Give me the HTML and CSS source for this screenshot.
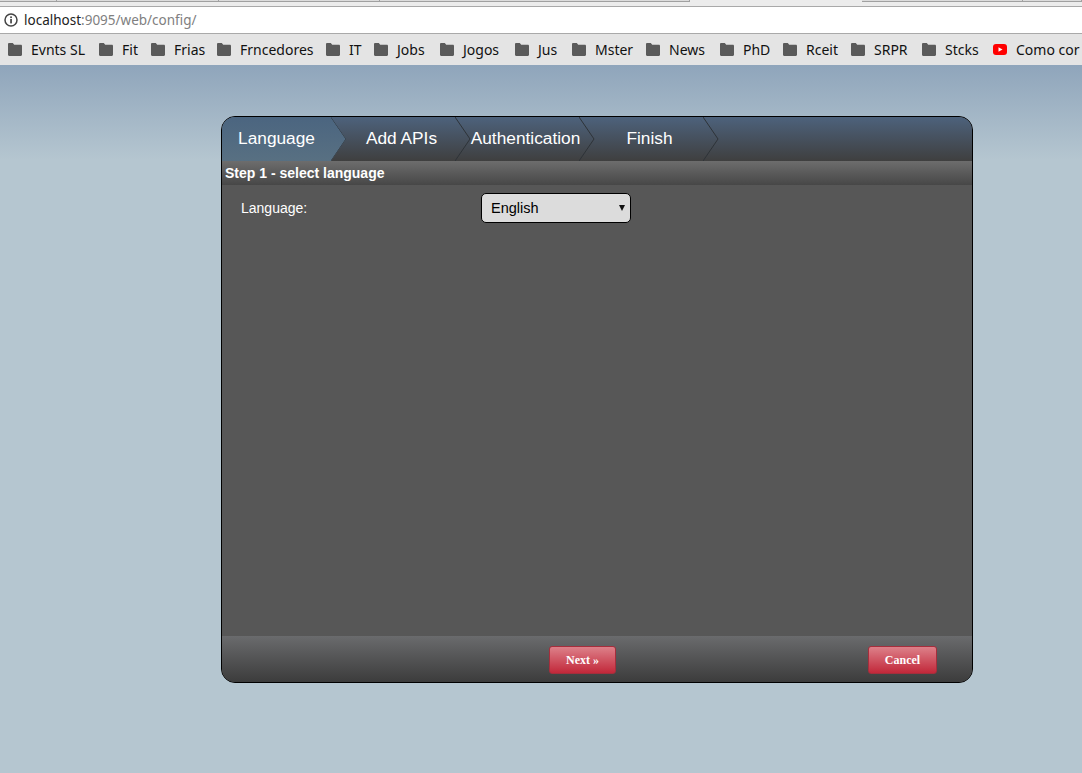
FILE: index.html
```html
<!DOCTYPE html>
<html lang="en">

<head>
    <meta charset="UTF-8">
    <title>config</title>
    <link rel="stylesheet" href="styles.css">
</head>

<body>
    <svg class="defs" width="0" height="0">
        <symbol id="folderIcon" viewBox="0 0 14 13">
            <path d="M0 1.2C0 .5.5 0 1.2 0h3.600l1.400 1.800h6.600c.7 0 1.200.5 1.200 1.200v8.800c0 .7-.5 1.200-1.200 1.200H1.200C.5 13 0 12.500 0 11.800z"/>
        </symbol>
        <symbol id="chevIcon" viewBox="0 0 16 44">
            <path d="M0 0l15 22L0 44" fill="none" stroke="#2e3338"/>
        </symbol>
    </svg>

    <div class="tabstrip">
        <span class="stripTab w1"></span>
        <span class="stripTab w2"></span>
        <span class="stripTab w3"></span>
        <span class="stripTab w4"></span>
        <span class="stripGap"></span>
        <span class="stripTab w5"></span>
        <span class="stripTab w6"></span>
    </div>

    <div class="address">
        <svg class="infoIcon" width="14" height="14" viewBox="0 0 14 14">
            <circle cx="7" cy="7" r="6" fill="none" stroke="#444" stroke-width="1.5"/>
            <rect x="6.2" y="6" width="1.7" height="4.4" fill="#444"/>
            <rect x="6.2" y="3.400" width="1.700" height="1.700" fill="#444"/>
        </svg>
        <span class="host">localhost</span><span class="path">:9095/web/config/</span>
    </div>

    <div class="bookmarks">
        <span class="mark"><svg class="folder"><use href="#folderIcon"/></svg>Evnts SL</span>
        <span class="mark"><svg class="folder"><use href="#folderIcon"/></svg>Fit</span>
        <span class="mark"><svg class="folder"><use href="#folderIcon"/></svg>Frias</span>
        <span class="mark"><svg class="folder"><use href="#folderIcon"/></svg>Frncedores</span>
        <span class="mark"><svg class="folder"><use href="#folderIcon"/></svg>IT</span>
        <span class="mark"><svg class="folder"><use href="#folderIcon"/></svg>Jobs</span>
        <span class="mark"><svg class="folder"><use href="#folderIcon"/></svg>Jogos</span>
        <span class="mark"><svg class="folder"><use href="#folderIcon"/></svg>Jus</span>
        <span class="mark"><svg class="folder"><use href="#folderIcon"/></svg>Mster</span>
        <span class="mark"><svg class="folder"><use href="#folderIcon"/></svg>News</span>
        <span class="mark"><svg class="folder"><use href="#folderIcon"/></svg>PhD</span>
        <span class="mark"><svg class="folder"><use href="#folderIcon"/></svg>Rceit</span>
        <span class="mark"><svg class="folder"><use href="#folderIcon"/></svg>SRPR</span>
        <span class="mark"><svg class="folder"><use href="#folderIcon"/></svg>Stcks</span>
        <span class="mark"><svg class="yt" viewBox="0 0 14 11"><rect width="14" height="11" rx="3" fill="#f00"/><path d="M5.500 3.200v4.600l4-2.300z" fill="#fff"/></svg>Como cor</span>
    </div>

    <div class="page">
        <div class="wizard">
            <div class="steps">
                <div class="step current">Language<svg class="chev"><use href="#chevIcon"/></svg></div>
                <div class="step">Add APIs<svg class="chev"><use href="#chevIcon"/></svg></div>
                <div class="step">Authentication<svg class="chev"><use href="#chevIcon"/></svg></div>
                <div class="step">Finish<svg class="chev"><use href="#chevIcon"/></svg></div>
            </div>
            <div class="stepTitle">Step 1 - select language</div>
            <div class="content">
                <div class="formRow">
                    <label class="formLabel" for="lang">Language:</label>
                    <span class="selectWrap">
                        <select id="lang" class="langSelect">
                            <option>English</option>
                        </select>
                    </span>
                </div>
            </div>
            <div class="actions">
                <button class="redBut nextBut">Next »</button>
                <button class="redBut cancelBut">Cancel</button>
            </div>
        </div>
    </div>
</body>

</html>
```

FILE: styles.css
```css
* {
    box-sizing: border-box;
}

html,
body {
    margin: 0;
    height: 100%;
    overflow: hidden;
}

body {
    display: flex;
    flex-direction: column;
    font-family: "Liberation Sans", Arial, sans-serif;
    background: #b5c6d0;
}

.defs {
    position: absolute;
}

.tabstrip {
    height: 7px;
    display: flex;
    background: #ececec;
    border-bottom: 1px solid #a9a9a9;
}

.stripTab {
    height: 2px;
    background: #dcdcdc;
    border-bottom: 1px solid #a0a0a0;
    border-right: 1px solid #a0a0a0;
}

.w1 { width: 57px; }
.w2 { width: 162px; }
.w3 { width: 161px; }
.w4 { width: 310px; }
.w5 { width: 161px; }
.w6 { width: 59px; }

.stripGap {
    width: 172px;
}

.address {
    height: 27px;
    display: flex;
    align-items: center;
    padding-left: 4px;
    background: #fff;
    border-bottom: 1px solid #a9a9a9;
    font-family: "Noto Sans", sans-serif;
    font-size: 13.5px;
}

.infoIcon {
    margin-right: 6px;
}

.host {
    color: #222;
}

.path {
    color: #808080;
}

.bookmarks {
    height: 31px;
    display: grid;
    grid-template-columns: 91px 52px 66px 109px 48px 66px 75px 57px 74px 74px 63px 68px 71px 71px 1fr;
    align-items: center;
    padding-left: 8px;
    background: #e4e4e4;
    font-family: "Noto Sans", sans-serif;
    font-size: 14px;
    color: #111;
    white-space: nowrap;
    overflow: hidden;
}

.mark {
    display: flex;
    align-items: center;
}

.folder {
    width: 14px;
    height: 13px;
    margin-right: 9px;
    fill: #5a5a5a;
}

.yt {
    width: 14px;
    height: 11px;
    margin-right: 9px;
}

.page {
    flex: 1;
    padding: 51px 0 0 221px;
    background: linear-gradient(#8fa5bb, #b5c6d0 95px);
}

.wizard {
    width: 752px;
    height: 567px;
    display: flex;
    flex-direction: column;
    border: 1px solid #000;
    border-radius: 14px;
    overflow: hidden;
    background: #575757;
}

.steps {
    height: 44px;
    display: flex;
    background: linear-gradient(#4d627c, #3f3f3f);
}

.step {
    position: relative;
    width: 124px;
    padding-right: 13px;
    text-align: center;
    line-height: 43px;
    font-size: 17.3px;
    color: #fff;
}

.step.current {
    padding-right: 15px;
    background: linear-gradient(#4b6580, #587082);
    clip-path: polygon(0 0, 109px 0, 124px 22px, 109px 44px, 0 44px);
}

.chev {
    position: absolute;
    top: 0;
    left: 109px;
    width: 16px;
    height: 44px;
}

.stepTitle {
    height: 24px;
    padding-left: 3px;
    line-height: 24px;
    font-size: 14px;
    font-weight: bold;
    color: #fff;
    background: linear-gradient(#6d6d6d, #474747);
}

.content {
    flex: 1;
    padding: 8px 19px;
    background: #575757;
}

.formRow {
    display: flex;
    align-items: center;
}

.formLabel {
    width: 240px;
    font-size: 14px;
    color: #fff;
}

.selectWrap {
    position: relative;
    display: flex;
}

.selectWrap::after {
    content: "";
    position: absolute;
    top: 12px;
    right: 6px;
    border-left: 3px solid transparent;
    border-right: 3px solid transparent;
    border-top: 6px solid #111;
}

.langSelect {
    appearance: none;
    width: 150px;
    height: 30px;
    padding-left: 9px;
    border: 1px solid #000;
    border-radius: 5px;
    background: #dcdcdc;
    color: #000;
    font-family: "Liberation Sans", Arial, sans-serif;
    font-size: 14.5px;
}

.actions {
    height: 46px;
    display: flex;
    align-items: flex-start;
    padding: 10px 35px 0 327px;
    background: linear-gradient(#6a6b6d, #3c3c3c);
}

.redBut {
    height: 28px;
    border: 1px solid #a52e3c;
    border-radius: 3px;
    background: linear-gradient(#dd8089, #c2283a);
    color: #fff;
    font-family: "Liberation Serif", serif;
    font-size: 12px;
    font-weight: bold;
}

.nextBut {
    width: 67px;
}

.cancelBut {
    width: 69px;
    margin-left: auto;
}
```
